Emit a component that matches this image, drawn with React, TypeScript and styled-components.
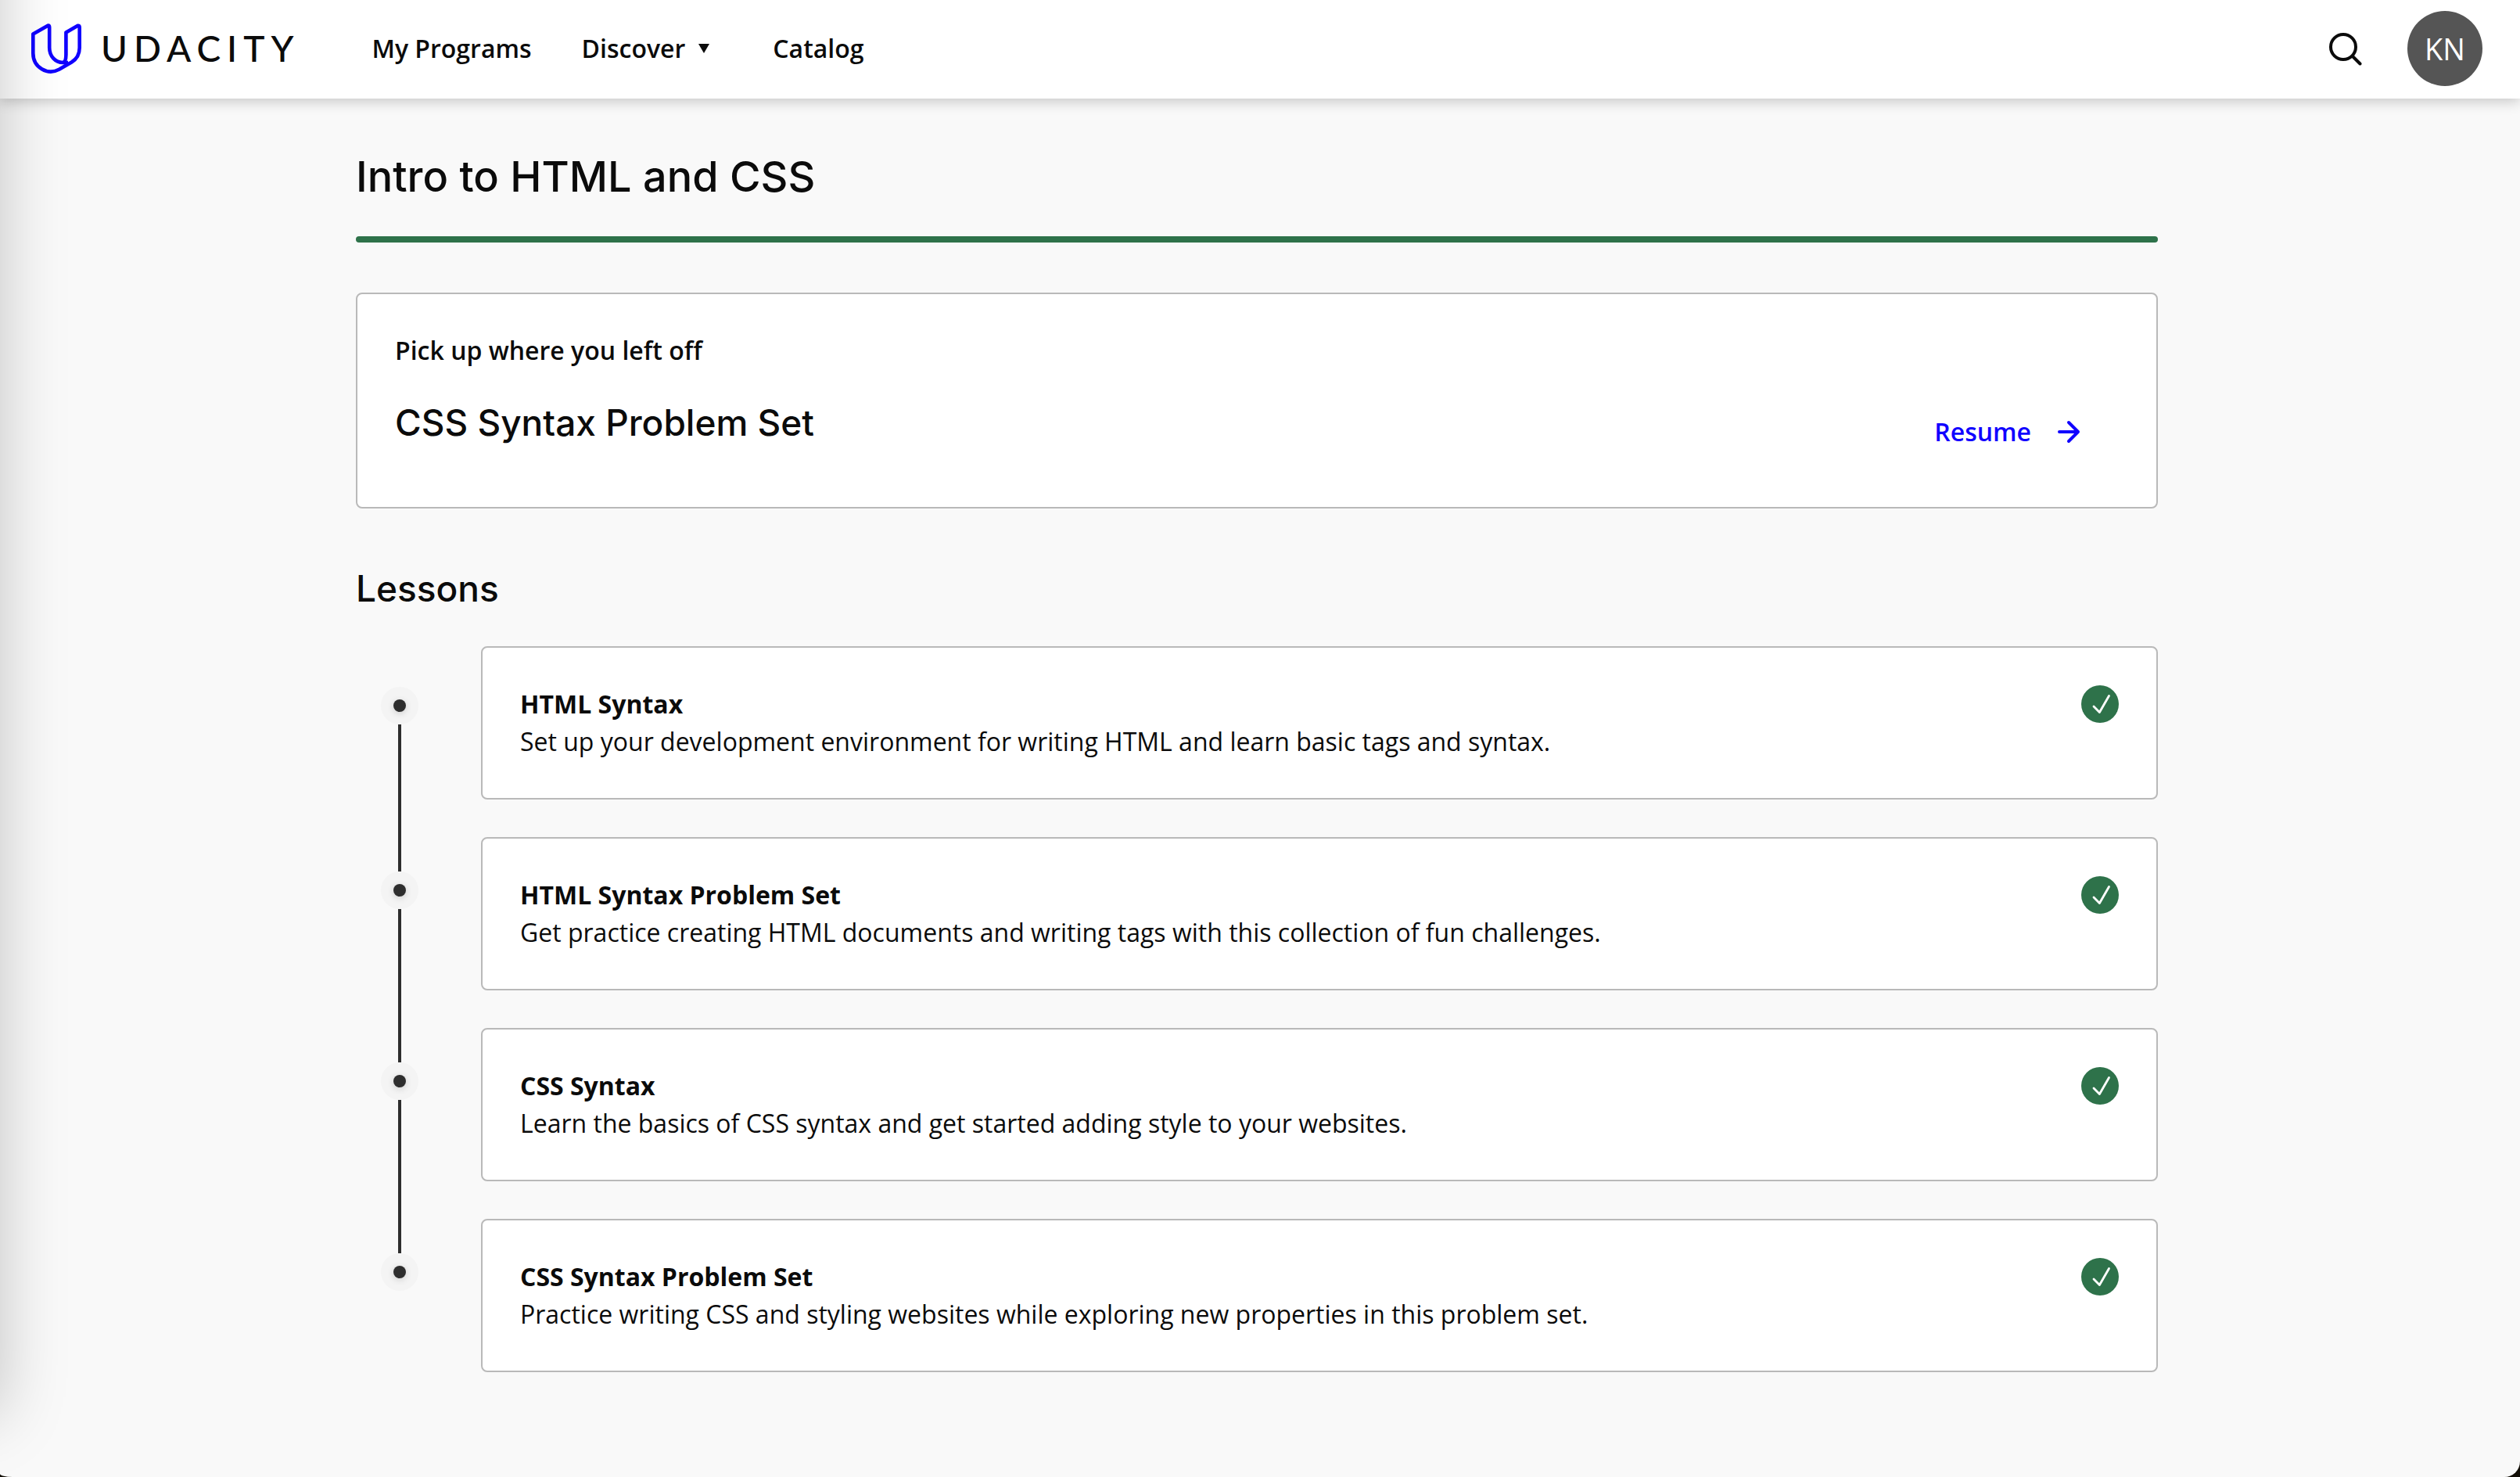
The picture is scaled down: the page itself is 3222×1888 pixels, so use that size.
import React from "react";
import styled, { createGlobalStyle } from "styled-components";

const ink = "#0b0b0b";
const blue = "#1000ff";
const green = "#2e724a";
const line = "#b9b9b9";
const body = '"Open Sans", "Noto Sans", sans-serif';
const display = 'Inter, "Liberation Sans", Arial, sans-serif';

const GlobalStyle = createGlobalStyle`
  *, *::before, *::after { box-sizing: border-box; }
  html { background: #120e06; }
  body {
    margin: 0;
    color: ${ink};
    font-family: ${body};
    font-size: 32px;
    line-height: 48px;
  }
  h1, h2, h3, p, ol { margin: 0; padding: 0; }
`;

const Page = styled.div`
  min-height: 100vh;
  background: #f9f9f9;
  border-radius: 0 0 20px 16px / 0 0 20px 4px;
  overflow: hidden;
`;

const DrawerShadow = styled.div`
  position: fixed;
  top: -120px;
  bottom: 80px;
  left: -400px;
  width: 400px;
  box-shadow: 0 0 80px rgba(0, 0, 0, 0.22);
  pointer-events: none;
  z-index: 2;
`;

const Header = styled.header`
  display: flex;
  align-items: center;
  height: 126px;
  padding: 0 48px 2px 40px;
  background: #fff;
  box-shadow: 0 4px 16px rgba(0, 0, 0, 0.2);
`;

const Brand = styled.a`
  display: flex;
  align-items: center;
  gap: 24px;
  color: ${ink};
  text-decoration: none;
`;

const Wordmark = styled.span`
  font-family: Lato, sans-serif;
  font-size: 46px;
  font-weight: 500;
  line-height: 64px;
  letter-spacing: 8px;
`;

const Nav = styled.nav`
  display: flex;
  align-items: center;
  gap: 64px;
  margin-left: 92px;
  font-weight: 600;
`;

const NavLink = styled.a`
  color: ${ink};
  text-decoration: none;
`;

const NavButton = styled.button`
  display: flex;
  align-items: center;
  gap: 16px;
  margin: 0;
  padding: 0 16px 0 0;
  border: 0;
  background: none;
  color: ${ink};
  font: inherit;
`;

const Tools = styled.div`
  display: flex;
  align-items: center;
  gap: 56px;
  margin-left: auto;
`;

const IconButton = styled.button`
  display: flex;
  padding: 0;
  border: 0;
  background: none;
  color: ${ink};
`;

const Avatar = styled.button`
  width: 96px;
  height: 96px;
  padding: 0;
  border: 0;
  border-radius: 50%;
  background: #555;
  color: #fff;
  font-family: ${body};
  font-size: 38px;
  line-height: 48px;
`;

const Main = styled.main`
  padding: 64px 56px 134px 48px;
`;

const Content = styled.div`
  max-width: 2304px;
  margin: 0 auto;
`;

const Title = styled.h1`
  font: 500 54px/72px ${display};
`;

const Heading = styled.h2`
  font: 500 46px/64px ${display};
`;

const Progress = styled.div`
  height: 8px;
  margin-top: 40px;
  border-radius: 4px;
  background: ${green};
`;

const Card = styled.section`
  padding: 48px;
  border: 2px solid ${line};
  border-radius: 8px;
  background: #fff;
`;

const ResumeCard = styled(Card)`
  display: flex;
  align-items: flex-end;
  justify-content: space-between;
  margin: 64px 0 70px;
  padding-bottom: 64px;
`;

const ResumeText = styled.div`
  display: grid;
  gap: 36px;
  padding-bottom: 12px;
`;

const Label = styled.p`
  font-weight: 600;
`;

const ResumeLink = styled.a`
  display: flex;
  align-items: center;
  gap: 32px;
  padding: 0 48px 8px 0;
  color: ${blue};
  font-weight: 600;
  text-decoration: none;
`;

const LessonList = styled.ol`
  display: grid;
  margin-top: 42px;
  list-style: none;
`;

const LessonRow = styled.li`
  display: grid;
  grid-template-columns: 112px 1fr;
  column-gap: 48px;
`;

const Track = styled.div`
  display: flex;
  flex-direction: column;
  align-items: center;
`;

const Lead = styled.span<{ $first: boolean }>`
  width: 4px;
  height: ${(p) => (p.$first ? 52 : 44)}px;
  background: ${(p) => (p.$first ? "transparent" : "#2e2e2e")};
`;

const Tail = styled.span<{ $last: boolean }>`
  flex: 1;
  width: 4px;
  background: ${(p) => (p.$last ? "transparent" : "#2e2e2e")};
`;

const Dot = styled.span`
  display: grid;
  place-items: center;
  width: 48px;
  height: 48px;
  border-radius: 50%;
  background: #f4f4f4;

  &::before {
    content: "";
    width: 16px;
    height: 16px;
    border-radius: 50%;
    background: #2e2e2e;
    box-shadow: 0 2px 8px rgba(0, 0, 0, 0.16);
  }
`;

const LessonCard = styled(Card)<{ $last: boolean }>`
  display: flex;
  align-items: flex-start;
  justify-content: space-between;
  gap: 48px;
  margin-bottom: ${(p) => (p.$last ? 0 : 48)}px;
`;

const LessonTitle = styled.h3`
  font-size: 32px;
  font-weight: 700;
`;

const LogoMark = () => (
  <svg width="65" height="64" viewBox="0 0 65 64" fill="none" stroke={blue} strokeWidth="4.6" strokeLinejoin="round" aria-hidden="true">
    <path d="M2.3 13.6 21.6 2.5Q23.2 2.5 23.2 5V31C23.2 42 31 50 40.5 50Q44.4 49 44.4 40V11.6L59.5 2.7Q61.7 2.5 61.7 5V31C61.7 39 58 45.5 51.5 49.5L35.5 58.8C21 66.5 2.3 56.5 2.3 38Z" />
    <path d="M41 50H47" />
  </svg>
);

const SearchIcon = () => (
  <svg width="44" height="44" viewBox="0 0 44 44" fill="none" stroke="currentColor" strokeWidth="4" strokeLinecap="round" aria-hidden="true">
    <circle cx="18" cy="20" r="16" />
    <path d="M30 32 39.500 41.500" />
  </svg>
);

const Caret = () => (
  <svg width="16" height="14" viewBox="0 0 16 14" fill="currentColor" aria-hidden="true">
    <path d="M1 1H15L8 13Z" />
  </svg>
);

const ArrowIcon = () => (
  <svg width="32" height="32" viewBox="0 0 32 32" fill="none" stroke="currentColor" strokeWidth="4" strokeLinecap="round" strokeLinejoin="round" aria-hidden="true">
    <path d="M4 16H28M16 4 28 16 16 28" />
  </svg>
);

const CheckIcon = () => (
  <svg width="48" height="48" viewBox="0 0 48 48" fill="none" role="img" aria-label="Completed">
    <circle cx="24" cy="24" r="24" fill={green} />
    <path d="M16 27 23.400 34.500 35.500 13.500" stroke="#fff" strokeWidth="2.8" strokeLinecap="round" strokeLinejoin="round" />
  </svg>
);

const lessons = [
  { title: "HTML Syntax", text: "Set up your development environment for writing HTML and learn basic tags and syntax." },
  { title: "HTML Syntax Problem Set", text: "Get practice creating HTML documents and writing tags with this collection of fun challenges." },
  { title: "CSS Syntax", text: "Learn the basics of CSS syntax and get started adding style to your websites." },
  { title: "CSS Syntax Problem Set", text: "Practice writing CSS and styling websites while exploring new properties in this problem set." },
];

export default function App() {
  return (
    <>
      <GlobalStyle />
      <Page>
        <DrawerShadow />
        <Header>
          <Brand href="#home">
            <LogoMark />
            <Wordmark>UDACITY</Wordmark>
          </Brand>
          <Nav>
            <NavLink href="#programs">My Programs</NavLink>
            <NavButton type="button">
              Discover
              <Caret />
            </NavButton>
            <NavLink href="#catalog">Catalog</NavLink>
          </Nav>
          <Tools>
            <IconButton type="button" aria-label="Search">
              <SearchIcon />
            </IconButton>
            <Avatar type="button">KN</Avatar>
          </Tools>
        </Header>
        <Main>
          <Content>
            <Title>Intro to HTML and CSS</Title>
            <Progress role="progressbar" aria-label="Course progress" aria-valuenow={100} />
            <ResumeCard>
              <ResumeText>
                <Label>Pick up where you left off</Label>
                <Heading>CSS Syntax Problem Set</Heading>
              </ResumeText>
              <ResumeLink href="#resume">
                Resume
                <ArrowIcon />
              </ResumeLink>
            </ResumeCard>
            <Heading>Lessons</Heading>
            <LessonList>
              {lessons.map((lesson, i) => {
                const last = i === lessons.length - 1;
                return (
                  <LessonRow key={lesson.title}>
                    <Track>
                      <Lead $first={i === 0} />
                      <Dot />
                      <Tail $last={last} />
                    </Track>
                    <LessonCard $last={last}>
                      <div>
                        <LessonTitle>{lesson.title}</LessonTitle>
                        <p>{lesson.text}</p>
                      </div>
                      <CheckIcon />
                    </LessonCard>
                  </LessonRow>
                );
              })}
            </LessonList>
          </Content>
        </Main>
      </Page>
    </>
  );
}
